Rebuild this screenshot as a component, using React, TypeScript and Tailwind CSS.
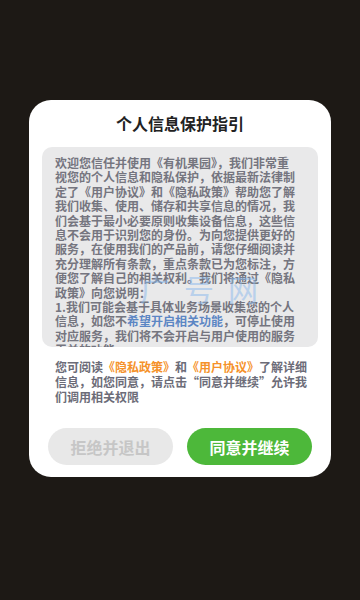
import React from "react";

const font = { fontFamily: '"Noto Sans CJK SC", "Noto Sans", sans-serif' };

export default function App() {
  return (
    <div className="w-[360px] h-[600px] bg-[#1d1915] flex flex-col items-center pt-[100px]" style={font}>
      <div className="w-[302px] bg-white rounded-[22px] px-[13px] pt-[11px] pb-[12px] flex flex-col">
        <div className="text-center text-[16px] leading-[24px] font-bold text-[#222]">个人信息保护指引</div>
        <div className="relative mt-[12px] h-[200px] rounded-[10px] bg-[#e9e9ea] overflow-hidden pl-[13px] pt-[9px]">
          <p className="w-[245px] text-[12px] leading-[14.4px] font-bold text-[#75757f]">
            欢迎您信任并使用《有机果园》，我们非常重视您的个人信息和隐私保护，依据最新法律制定了《用户协议》和《隐私政策》帮助您了解我们收集、使用、储存和共享信息的情况，我们会基于最小必要原则收集设备信息，这些信息不会用于识别您的身份。为向您提供更好的服务，在使用我们的产品前，请您仔细阅读并充分理解所有条款，重点条款已为您标注，方便您了解自己的相关权利。我们将通过《隐私政策》向您说明：
            <br />
            1.我们可能会基于具体业务场景收集您的个人信息，如您不<span className="text-[#5c86c4]">希望开启相关功能</span>，可停止使用对应服务，我们将不会开启与用户使用的服务无关的功能。
          </p>
          <div className="absolute left-[98px] top-[124px] flex gap-[14px] text-[30px] leading-[34px] font-normal text-[#8ab8ec] opacity-50 pointer-events-none">
            <span>广</span>
            <span>号</span>
            <span>网</span>
          </div>
        </div>
        <p className="mt-[12px] ml-[13px] w-[256px] text-[12px] leading-[15px] font-bold text-[#6c6c78]">
          您可阅读<span className="text-[#f5922a]">《隐私政策》</span>和<span className="text-[#f5922a]">《用户协议》</span>了解详细信息，如您同意，请点击“同意并继续”允许我们调用相关权限
        </p>
        <div className="mt-[24px] flex justify-center gap-[14px]">
          <div className="w-[125px] h-[37px] rounded-full bg-[#e8e8e8] flex items-center justify-center text-[16px] font-bold text-[#c6c6c6]">
            拒绝并退出
          </div>
          <div className="w-[125px] h-[37px] rounded-full bg-[#4db83a] flex items-center justify-center text-[16px] font-bold text-white">
            同意并继续
          </div>
        </div>
      </div>
    </div>
  );
}
